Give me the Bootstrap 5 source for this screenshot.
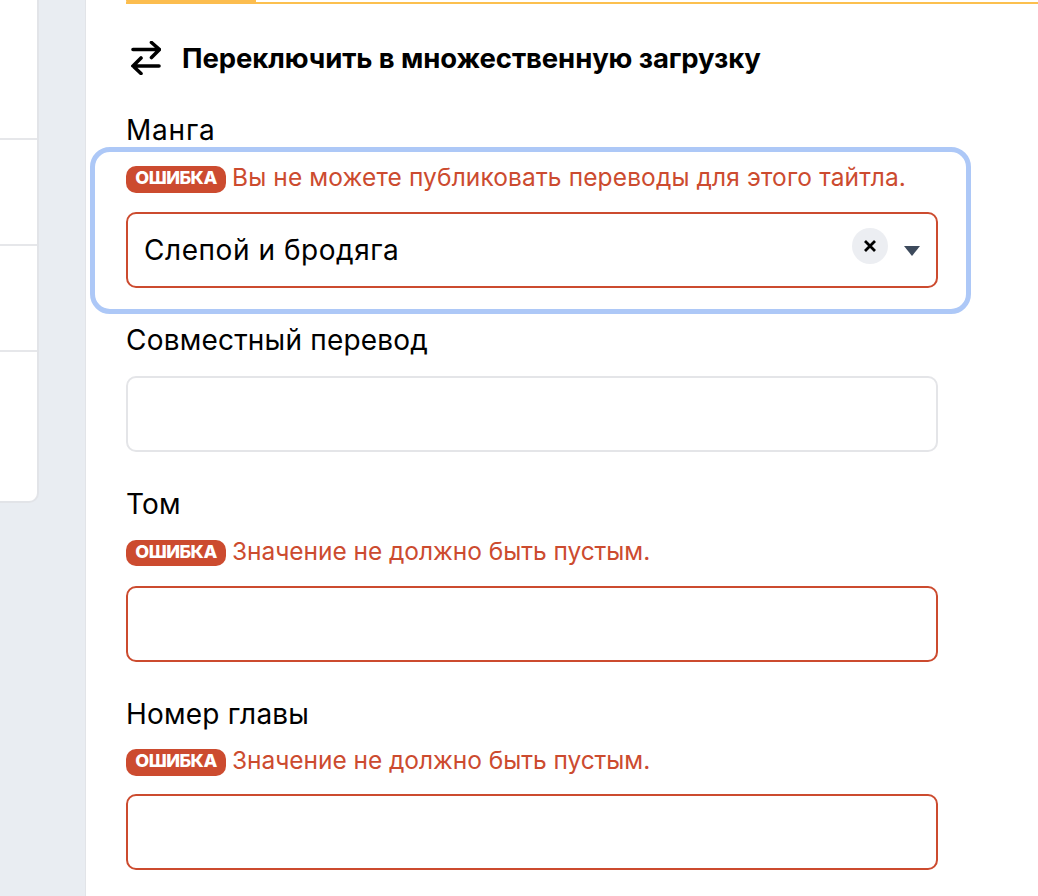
<!DOCTYPE html>
<html lang="ru">
<head>
<meta charset="utf-8">
<title>Загрузка</title>
<link href="https://cdn.jsdelivr.net/npm/bootstrap@5.3.0/dist/css/bootstrap.min.css" rel="stylesheet">
<style>
html,body{height:896px;overflow:hidden}
body{background:#e9edf2;font-family:"Inter","Noto Sans",sans-serif;color:#000}
.shell{height:896px}
.side-card{width:39px;height:503px;background:#fff;border-right:2px solid #e2e4e8;border-bottom:2px solid #e2e4e8;border-bottom-right-radius:10px;padding-top:138px}
.side-row{height:106px;border-top:2px solid #e6e7ea}
.panel{margin-left:46px;width:953px;background:#fff;border-left:1px solid #e2e4e8;padding:0 100px 0 40px;height:896px}
.prog{height:4px;margin-right:-100px;border-bottom:2px solid #fcc04f}
.prog-fill{height:4px;width:130px;background:#fcbd4f;border-radius:0 0 0 7px}
.head-row{margin-top:37px;height:34px;gap:21px}
.head-row svg{width:30px;height:34px;margin-left:5px;flex:none}
.head-txt{font-size:27.5px;font-weight:700;letter-spacing:-.1px;line-height:34px;white-space:nowrap}
.lbl{font-size:28px;line-height:34px;letter-spacing:.2px;height:34px}
.focus-box{margin:0 -33px 0 -36px;padding:14px 28px 21px 31px;border:5px solid #adc8f7;border-radius:20px;height:167px}
.err-row{height:28px;gap:6px}
.err-pill{background:#cc4b2f;color:#fff;font-size:18px;font-weight:800;letter-spacing:-.5px;width:100px;height:27px;border-radius:10px;line-height:23px;padding:0;text-align:center;flex:none}
.err-txt{color:#cc4b2f;font-size:24.5px;letter-spacing:.12px;line-height:23px;white-space:nowrap}
.err-short{letter-spacing:-.05px}
.fld.form-control{height:76px;border:2px solid #e4e5e8;border-radius:10px;background:#fff;box-shadow:none;padding:0 16px}
.fld.bad{border-color:#cc4b2f}
.pick{height:76px;margin-top:18px;border:2px solid #cc4b2f;border-radius:10px;padding:0 16px}
.pick-val{font-size:28px;letter-spacing:.55px;flex:1 1 auto}
.clr{width:36px;height:36px;background:#eceef2;margin-top:-8px;margin-right:-1px;flex:none}
.clr svg{width:14px;height:14px}
.caret-down{width:0;height:0;border-left:8px solid transparent;border-right:8px solid transparent;border-top:10px solid #3d4a5c;margin:0 0 -2px 17px;flex:none}
.lbl-first{margin-top:38px;letter-spacing:.8px}
.lbl-second{margin-top:9px}
.gap-field{margin-top:19px}
.gap-group{margin-top:35px}
.row-tom{margin-top:19px;height:26px}
.row-tom .err-pill{height:26px}
.row-ch{margin-top:18px;height:27px}
.gap-tom{margin-top:20px}
.gap-ch{margin-top:18px}
</style>
</head>
<body>
<div class="shell d-flex align-items-start">
  <aside class="side-card flex-shrink-0">
    <div class="side-row"></div>
    <div class="side-row"></div>
    <div class="side-row"></div>
  </aside>
  <main class="panel flex-shrink-0">
    <div class="prog"><div class="prog-fill"></div></div>
    <div class="head-row d-flex align-items-center">
      <svg viewBox="0 0 30 34" fill="none" stroke="#000" stroke-width="3.6" stroke-linecap="round" stroke-linejoin="miter" aria-hidden="true">
        <path d="M2 8.5H28M20.5 1.5l8 7-8 8"/>
        <path d="M28 25H2M10 17l-8 8 8 7.500"/>
      </svg>
      <span class="head-txt">Переключить в множественную загрузку</span>
    </div>
    <form>
      <div class="lbl lbl-first">Манга</div>
      <div class="focus-box">
        <div class="err-row d-flex align-items-start">
          <span class="badge err-pill">ОШИБКА</span>
          <span class="err-txt">Вы не можете публиковать переводы для этого тайтла.</span>
        </div>
        <div class="pick d-flex align-items-center">
          <span class="pick-val">Слепой и бродяга</span>
          <span class="clr rounded-circle d-flex align-items-center justify-content-center">
            <svg viewBox="0 0 14 14" fill="none" stroke="#000" stroke-width="2.8"><path d="M2 2l10 10M12 2L2 12"/></svg>
          </span>
          <span class="caret-down"></span>
        </div>
      </div>
      <div class="lbl lbl-second">Совместный перевод</div>
      <input class="form-control fld gap-field" type="text" aria-label="Совместный перевод">
      <div class="lbl gap-group">Том</div>
      <div class="err-row row-tom d-flex align-items-start">
        <span class="badge err-pill">ОШИБКА</span>
        <span class="err-txt err-short">Значение не должно быть пустым.</span>
      </div>
      <input class="form-control fld bad gap-tom" type="text" aria-label="Том">
      <div class="lbl gap-group">Номер главы</div>
      <div class="err-row row-ch d-flex align-items-start">
        <span class="badge err-pill">ОШИБКА</span>
        <span class="err-txt err-short">Значение не должно быть пустым.</span>
      </div>
      <input class="form-control fld bad gap-ch" type="text" aria-label="Номер главы">
    </form>
  </main>
</div>
<script src="https://cdn.jsdelivr.net/npm/bootstrap@5.3.0/dist/js/bootstrap.bundle.min.js"></script>
</body>
</html>
